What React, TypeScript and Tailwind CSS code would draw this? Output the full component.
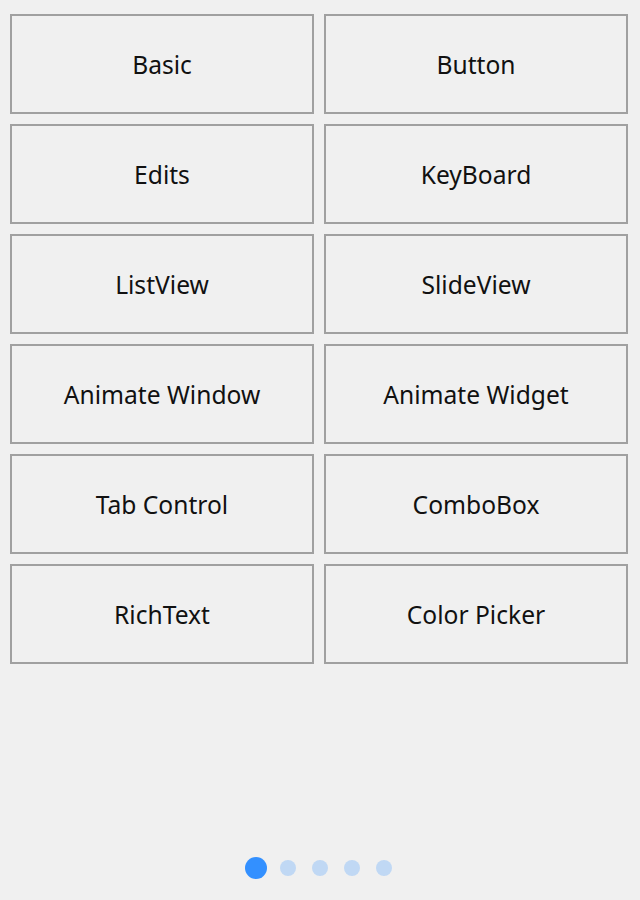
import React from "react";

const items = [
  "Basic",
  "Button",
  "Edits",
  "KeyBoard",
  "ListView",
  "SlideView",
  "Animate Window",
  "Animate Widget",
  "Tab Control",
  "ComboBox",
  "RichText",
  "Color Picker",
];

export default function App() {
  return (
    <div
      className="w-[640px] h-[900px] bg-[#f0f0f0] flex flex-col"
      style={{ fontFamily: '"Noto Sans", "Open Sans", sans-serif' }}
    >
      <div className="grid grid-cols-[304px_304px] gap-[10px] pl-[10px] pt-[14px]">
        {items.map((t) => (
          <div
            key={t}
            className="h-[100px] border-2 border-[#a0a0a0] flex items-center justify-center pt-[2px] text-[24.6px] text-[#111111]"
          >
            {t}
          </div>
        ))}
      </div>
      <div className="flex-1" />
      <div className="flex items-center justify-center pb-[21px]">
        {[0, 1, 2, 3, 4].map((i) => (
          <div key={i} className="w-[32px] h-[22px] flex items-center justify-center">
            {i === 0 ? (
              <div className="w-[22px] h-[22px] rounded-full bg-[#3390ff]" />
            ) : (
              <div className="w-[16px] h-[16px] rounded-full bg-[#c0d8f4]" />
            )}
          </div>
        ))}
      </div>
    </div>
  );
}
